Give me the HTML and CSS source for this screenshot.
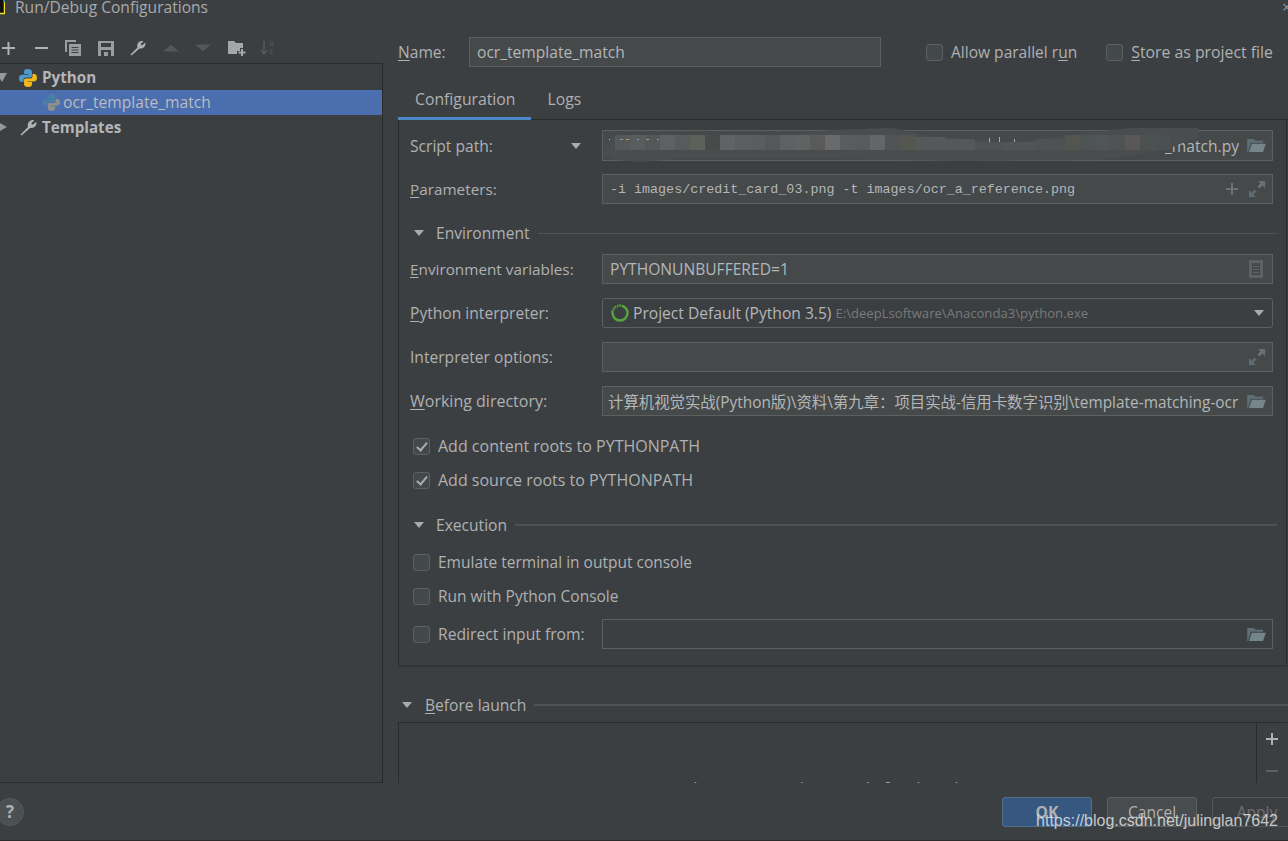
FILE: index.html
```html
<!DOCTYPE html>
<html lang="en">
<head>
  <meta charset="UTF-8">
  <meta name="viewport" content="width=device-width, initial-scale=1.0">
  <title>Run/Debug Configurations</title>
  <link rel="stylesheet" href="styles.css">
</head>
<body>
  <div class="dialog">
    <!-- Title bar -->
    <div class="titlebar">
      <svg class="app-icon" width="5" height="15" viewBox="0 0 5 15"><rect x="0" y="0" width="4" height="14" fill="#111"/><path d="M0 13.500H4.500V2" fill="none" stroke="#f4e01d" stroke-width="1.500"/><rect x="3" y="0" width="2" height="2" fill="#2f7fc0"/></svg>
      <span class="title-text">Run/Debug Configurations</span>
      <span class="close-x">×</span>
    </div>

    <div class="main">
      <!-- Left side: toolbar and tree -->
      <div class="side">
        <div class="toolbar">
          <svg class="tool" viewBox="0 0 16 16"><path d="M2 8h13M8.500 2v13" stroke="#afb1b3" stroke-width="2"/></svg>
          <svg class="tool" viewBox="0 0 16 16"><path d="M2 8h13" stroke="#afb1b3" stroke-width="2"/></svg>
          <svg class="tool" viewBox="0 0 16 16"><path d="M0 0h11v2H2v10H0z" fill="#9a9c9e"/><path d="M4 4h12v12H4z" fill="#9a9c9e"/><path d="M6.500 7.500h7M6.500 10h7M6.500 12.500h7" stroke="#3c3f41"/></svg>
          <svg class="tool" viewBox="0 0 16 16"><path d="M0 1h16v15H0z" fill="#9a9c9e"/><path d="M3 3h10v4H3zM3 10h10v6H3z" fill="#3c3f41"/><path d="M6 12h4v4H6z" fill="#9a9c9e"/></svg>
          <svg class="tool" viewBox="0 0 16 16"><path d="M1.500 15.500l-1-1 7-7c-.7-2.500.2-6 4-6.500.7 0 1.300.1 2 .4L10.500 4l1.500 1.500 3.300-3c.8 3.500-1.500 6.500-5.800 6z" fill="#afb1b3"/></svg>
          <svg class="tool" viewBox="0 0 16 16"><path d="M.5 11.500L8 4.500l7.500 7z" fill="#55585a"/></svg>
          <svg class="tool" viewBox="0 0 16 16"><path d="M.5 4.500L8 11.500l7.500-7z" fill="#55585a"/></svg>
          <svg class="tool tool-wide" viewBox="0 0 18 16"><path d="M0 1h6l2 2h7v5h-3v3H9v3H0z" fill="#a4a6a8"/><path d="M10.500 12.500h7M14 9v7" stroke="#a4a6a8" stroke-width="2"/></svg>
          <svg class="tool" viewBox="0 0 16 16"><path d="M4 1v12M1 10l3 4 3-4" fill="none" stroke="#55585a" stroke-width="1.500"/><text x="9" y="6" class="sort-a">a</text><text x="9" y="14" class="sort-a">z</text></svg>
        </div>
        <div class="tree">
          <div class="tree-row bold">
            <span class="arrow-down"></span>
            <svg class="py" viewBox="0 0 16 16"><path d="M8 0C5 0 4.500 1.200 4.500 2.500V4.500H8.500V5H2.500C1 5 0 6.200 0 8.200S1 11.500 2.500 11.500H4V9.500C4 8.300 5 7.500 6 7.500H10C11 7.500 11.500 6.800 11.500 6V2.500C11.500 1 10 0 8 0Z" fill="#4c9ac9"/><path d="M8 16C11 16 11.500 14.800 11.500 13.500V11.500H7.500V11H13.500C15 11 16 9.800 16 7.800S15 4.500 13.500 4.500H12V6.500C12 7.700 11 8.500 10 8.500H6C5 8.500 4.500 9.200 4.500 10V13.500C4.500 15 6 16 8 16Z" fill="#f2b81c"/></svg>
            <span class="tree-text">Python</span>
          </div>
          <div class="tree-row selected">
            <svg class="py py-dim" viewBox="0 0 16 16"><path d="M8 0C5 0 4.500 1.200 4.500 2.500V4.500H8.500V5H2.500C1 5 0 6.200 0 8.200S1 11.500 2.500 11.500H4V9.500C4 8.300 5 7.500 6 7.500H10C11 7.500 11.500 6.800 11.500 6V2.500C11.500 1 10 0 8 0Z" fill="#4a7fa8"/><path d="M8 16C11 16 11.500 14.800 11.500 13.500V11.500H7.500V11H13.500C15 11 16 9.800 16 7.800S15 4.500 13.500 4.500H12V6.500C12 7.700 11 8.500 10 8.500H6C5 8.500 4.500 9.200 4.500 10V13.500C4.500 15 6 16 8 16Z" fill="#8c8f8a"/></svg>
            <span class="tree-text">ocr_template_match</span>
          </div>
          <div class="tree-row bold">
            <span class="arrow-right"></span>
            <svg class="wrench" viewBox="0 0 16 16"><path d="M1.500 15.500l-1-1 7-7c-.7-2.500.2-6 4-6.500.7 0 1.300.1 2 .4L10.500 4l1.500 1.500 3.300-3c.8 3.500-1.500 6.500-5.800 6z" fill="#afb1b3"/></svg>
            <span class="tree-text">Templates</span>
          </div>
        </div>
      </div>

      <!-- Right side: form -->
      <div class="content">
        <div class="name-row">
          <span class="name-label"><u>N</u>ame:</span>
          <div class="field name-field">ocr_template_match</div>
          <span class="check check-parallel"><i class="box"></i><span>Allow parallel r<u>u</u>n</span></span>
          <span class="check check-store"><i class="box"></i><span><u>S</u>tore as project file</span></span>
        </div>

        <div class="tabs">
          <span class="tab active">Configuration</span>
          <span class="tab">Logs</span>
        </div>

        <div class="panel">
          <div class="row row-script">
            <label>Script path:<span class="drop"></span></label>
            <div class="field script-field">
              <span class="grow right">_match.py</span>
              <svg class="folder" viewBox="0 0 20 16"><use href="#folder-icon"/></svg>
              <!-- smear painted over the private part of the path -->
              <svg class="smear" width="600" height="33" viewBox="0 0 600 33">
                <path d="M2 20L8 8 13 5H180L230 0 290-2 328 6 398 12 418 12 468 5 501 1 528-2H596V7L563 20 523 27 495 30 358 31 178 28 83 28 38 32 13 30 2 25Z" fill="#4a4d4e"/>
                <g class="cells-top">
                  <rect x="13" y="5" width="15" height="15" fill="#56595a"/>
                  <rect x="28" y="5" width="15" height="15" fill="#5a5d5e"/>
                  <rect x="43" y="5" width="15" height="15" fill="#555859"/>
                  <rect x="58" y="5" width="15" height="15" fill="#5e6162"/>
                  <rect x="73" y="5" width="15" height="15" fill="#585b5c"/>
                  <rect x="88" y="5" width="15" height="15" fill="#5e605a"/>
                  <rect x="103" y="5" width="15" height="15" fill="#484b4c"/>
                  <rect x="118" y="5" width="15" height="15" fill="#606364"/>
                  <rect x="133" y="5" width="15" height="15" fill="#5b5e5f"/>
                  <rect x="148" y="5" width="15" height="15" fill="#5a5c5d"/>
                  <rect x="163" y="5" width="15" height="15" fill="#555859"/>
                  <rect x="178" y="5" width="15" height="15" fill="#5e6162"/>
                  <rect x="193" y="5" width="15" height="15" fill="#606364"/>
                  <rect x="208" y="5" width="15" height="15" fill="#5a5a5b"/>
                  <rect x="223" y="5" width="15" height="15" fill="#686a6b"/>
                  <rect x="238" y="5" width="15" height="15" fill="#5a5d5e"/>
                  <rect x="253" y="5" width="15" height="15" fill="#585b5c"/>
                  <rect x="268" y="5" width="15" height="15" fill="#646566"/>
                  <rect x="283" y="5" width="15" height="15" fill="#515455"/>
                  <rect x="298" y="5" width="15" height="15" fill="#55564f"/>
                  <rect x="313" y="7" width="30" height="13" fill="#565859"/>
                  <rect x="343" y="9" width="30" height="11" fill="#555858"/>
                  <rect x="373" y="12" width="30" height="8" fill="#505354"/>
                  <rect x="403" y="12" width="30" height="8" fill="#525556"/>
                  <rect x="433" y="9" width="30" height="11" fill="#4f5253"/>
                  <rect x="463" y="5" width="15" height="15" fill="#55554f"/>
                  <rect x="478" y="5" width="15" height="15" fill="#4f5354"/>
                  <rect x="493" y="5" width="15" height="15" fill="#505556"/>
                  <rect x="508" y="5" width="15" height="15" fill="#4f5354"/>
                  <rect x="523" y="5" width="15" height="15" fill="#5a5856"/>
                  <rect x="538" y="5" width="15" height="15" fill="#4d5152"/>
                  <rect x="553" y="5" width="15" height="15" fill="#4b5051"/>
                </g>
                <rect x="7" y="9" width="1" height="1" fill="#c7cbcd"/>
                <rect x="18" y="9" width="3" height="1" fill="#7d9fb5"/>
                <rect x="24" y="9" width="3" height="1" fill="#b59b7d"/>
                <rect x="35" y="9" width="2" height="1" fill="#7d9fb5"/>
                <rect x="44" y="9" width="3" height="1" fill="#b59b7d"/>
                <rect x="55" y="9" width="2" height="1" fill="#7d9fb5"/>
                <rect x="387" y="8" width="1" height="4" fill="#a7a9ab"/>
                <rect x="397" y="7" width="1" height="5" fill="#a7a9ab"/>
                <rect x="412" y="9" width="1" height="3" fill="#a7a9ab"/>
              </svg>
            </div>
          </div>
          <div class="row row-params">
            <label class="label-tight"><u>P</u>arameters:</label>
            <div class="field mono">
              <span class="grow">-i images/credit_card_03.png -t images/ocr_a_reference.png</span>
              <svg class="small-icon plus-icon" viewBox="0 0 14 14"><path d="M1 7h12M7 1v12" stroke="#6e7173" stroke-width="2"/></svg>
              <svg class="small-icon" viewBox="0 0 16 16"><use href="#expand-icon"/></svg>
            </div>
          </div>

          <div class="group-head env-head"><span class="drop"></span><span>Environment</span><i class="line"></i></div>
          <div class="row row-env">
            <label class="label-tight"><u>E</u>nvironment variables:</label>
            <div class="field">
              <span class="grow">PYTHONUNBUFFERED=1</span>
              <svg class="doc" viewBox="0 0 14 18"><path d="M0 0h14v18H0zM3 3v12h8V3z" fill="#5d6164" fill-rule="evenodd"/><path d="M4 6.500h6M4 9.500h6M4 12.500h6" stroke="#5d6164"/></svg>
            </div>
          </div>
          <div class="row">
            <label><u>P</u>ython interpreter:</label>
            <div class="field combo">
              <svg class="ring" viewBox="0 0 18 18"><circle cx="9" cy="9" r="7.500" fill="none" stroke="#54a63d" stroke-width="2.500"/><path d="M2 6.500A7.500 7.500 0 0 1 11 1.800" fill="none" stroke="#3c3f41" stroke-width="2.500" stroke-dasharray="1 1.500"/></svg>
              <span>Project Default (Python 3.5)</span>
              <span class="grow path-hint">E:\deepLsoftware\Anaconda3\python.exe</span>
              <span class="drop combo-drop"></span>
            </div>
          </div>
          <div class="row">
            <label>Interpreter options:</label>
            <div class="field">
              <span class="grow"></span>
              <svg class="small-icon" viewBox="0 0 16 16"><use href="#expand-icon"/></svg>
            </div>
          </div>
          <div class="row">
            <label class="label-wide"><u>W</u>orking directory:</label>
            <div class="field">
              <span class="grow cjk">计算机视觉实战(Python版)\资料\第九章：项目实战-信用卡数字识别\template-matching-ocr</span>
              <svg class="folder" viewBox="0 0 20 16"><use href="#folder-icon"/></svg>
            </div>
          </div>

          <div class="check-list first-list">
            <span class="check"><i class="box checked"></i>Add content roots to PYTHONPATH</span>
            <span class="check"><i class="box checked"></i>Add source roots to PYTHONPATH</span>
          </div>

          <div class="group-head exec-head"><span class="drop"></span><span>Execution</span><i class="line"></i></div>
          <div class="check-list exec-list">
            <span class="check"><i class="box"></i>Emulate terminal in output console</span>
            <span class="check"><i class="box"></i>Run with Python Console</span>
          </div>
          <div class="row redirect">
            <label class="check"><i class="box"></i>Redirect input from:</label>
            <div class="field plain">
              <span class="grow"></span>
              <svg class="folder" viewBox="0 0 20 16"><use href="#folder-icon"/></svg>
            </div>
          </div>
        </div>

        <div class="group-head launch-head"><span class="drop"></span><span><u>B</u>efore launch</span><i class="line"></i></div>
        <div class="task-list">
          <div class="task-empty">There are no tasks to run before launch</div>
          <div class="task-tools">
            <svg viewBox="0 0 14 14"><path d="M1 7h12M7 1v12" stroke="#afb1b3" stroke-width="2"/></svg>
            <svg viewBox="0 0 14 14"><path d="M1 7h12" stroke="#5f6264" stroke-width="2"/></svg>
          </div>
        </div>
      </div>
    </div>

    <!-- Footer buttons -->
    <div class="footer">
      <span class="help">?</span>
      <div class="buttons">
        <span class="btn primary">OK</span>
        <span class="btn">Cancel</span>
        <span class="btn disabled">Apply</span>
      </div>
    </div>
    <div class="watermark">https://blog.csdn.net/julinglan7642</div>
  </div>

  <svg class="defs" width="0" height="0">
    <symbol id="folder-icon" viewBox="0 0 20 16">
      <path d="M0 15V1h7l2 2h8v2H4L1.500 13 1 15z" fill="#5f6f76"/>
      <path d="M5 6h15l-3 9H2z" fill="#74858c"/>
    </symbol>
    <symbol id="expand-icon" viewBox="0 0 16 16">
      <path d="M9 0h7v7l-2.500-2.500-3 3-2-2 3-3z" fill="#6e7173"/>
      <path d="M7 16H0V9l2.500 2.500 3-3 2 2-3 3z" fill="#5d6b74"/>
    </symbol>
  </svg>
</body>
</html>
```

FILE: styles.css
```css
body {
  margin: 0;
  background-color: #3c3f41;
  color: #afb1b3;
  font-family: "Open Sans", "Noto Sans CJK SC", sans-serif;
  font-size: 15.6px;
  overflow: hidden;
}
u {
  text-underline-offset: 2px;
}
.defs {
  position: absolute;
}
.dialog {
  position: relative;
  height: 840px;
  border-bottom: 1px solid #2b2b2b;
  display: flex;
  flex-direction: column;
  overflow: hidden;
}

/* Title bar */
.titlebar {
  height: 14px;
  display: flex;
  align-items: flex-start;
  gap: 10px;
}
.app-icon {
  flex: none;
}
.title-text {
  flex: 1;
  line-height: 14px;
  color: #a8aaac;
}
.close-x {
  line-height: 14px;
  color: #999;
  margin-right: -3px;
}

/* Main area */
.main {
  height: 769px;
  flex: none;
  display: flex;
  overflow: hidden;
}
.side {
  width: 383px;
  flex: none;
  display: flex;
  flex-direction: column;
}
.toolbar {
  height: 49px;
  flex: none;
  box-sizing: border-box;
  padding: 26px 0 0 0;
  display: flex;
  gap: 16.5px;
}
.tool {
  width: 16px;
  height: 16px;
  flex: none;
  overflow: visible;
}
.tool-wide {
  width: 18px;
  margin-right: -2px;
}
.tree {
  flex: 1;
  border-top: 1px solid #2b2b2b;
  border-right: 1px solid #2b2b2b;
  border-bottom: 1px solid #2b2b2b;
  padding-top: 1px;
}
.tree-row {
  height: 25px;
  display: flex;
  align-items: center;
  color: #b4b6b8;
  position: relative;
  padding-left: 19px;
  gap: 5px;
}
.tree-text {
  margin-top: -2px;
}
.bold {
  font-weight: 700;
  font-size: 15.2px;
}
.selected {
  background-color: #4b6eaf;
  padding-left: 43px;
  gap: 3px;
  color: #b9bcc0;
}
.py {
  width: 18px;
  height: 18px;
}
.py-dim {
  width: 17px;
  height: 17px;
}
.wrench {
  width: 17px;
  height: 17px;
  margin-left: 1px;
}
.arrow-down {
  position: absolute;
  left: -3px;
  top: 8px;
  border-left: 5px solid transparent;
  border-right: 5px solid transparent;
  border-top: 9px solid #96989a;
}
.arrow-right {
  position: absolute;
  left: 0;
  top: 8px;
  border-top: 4px solid transparent;
  border-bottom: 4px solid transparent;
  border-left: 7px solid #96989a;
}

/* Form */
.content {
  flex: 1;
  min-width: 0;
  padding-left: 15px;
}
.name-row {
  height: 30px;
  margin-top: 23px;
  display: flex;
  align-items: center;
}
.name-label {
  width: 71px;
}
.field {
  flex: 1;
  min-width: 0;
  height: 30px;
  box-sizing: border-box;
  border: 1px solid #5e6060;
  background-color: #45494a;
  padding: 0 7px;
  display: flex;
  align-items: center;
  gap: 8px;
  position: relative;
  color: #b4b6b8;
  white-space: nowrap;
  overflow: hidden;
}
.name-field {
  flex: none;
  width: 412px;
}
.check {
  display: flex;
  align-items: center;
  white-space: nowrap;
  color: #afb1b3;
  font-size: 16px;
  line-height: 20px;
}
.box {
  width: 17px;
  height: 17px;
  box-sizing: border-box;
  border: 1px solid #5e6060;
  border-radius: 3px;
  background-color: #43494a;
  margin-right: 8px;
  flex: none;
  position: relative;
}
.box.checked::after {
  content: "";
  position: absolute;
  left: 5px;
  top: 1px;
  width: 4px;
  height: 9px;
  border: solid #a9abad;
  border-width: 0 2px 2px 0;
  transform: rotate(40deg);
}
.check-parallel {
  margin-left: 45px;
  font-size: 15.55px;
}
.check-store {
  margin-left: 29px;
  font-size: 15.8px;
}
.tabs {
  height: 53px;
  box-sizing: border-box;
  display: flex;
  align-items: flex-end;
  border-bottom: 1px solid #2b2b2b;
  font-size: 15.75px;
}
.tab {
  padding: 0 16px;
  height: 37px;
  box-sizing: border-box;
  line-height: 32px;
  margin-bottom: -1px;
}
.tab.active {
  padding-left: 17px;
  border-bottom: 3px solid #4a88c7;
}
.panel {
  height: 547px;
  box-sizing: border-box;
  border-left: 1px solid #2b2b2b;
  border-right: 1px solid #2b2b2b;
  border-bottom: 2px solid #323436;
  padding: 10px 13px 0 11px;
  margin-right: 1px;
}
.row {
  display: flex;
  align-items: center;
  margin-top: 14px;
}
.row-script {
  margin-top: 0;
}
.row-params {
  margin-top: 13px;
}
.row-env {
  margin-top: 11px;
}
.row label {
  width: 192px;
  flex: none;
  display: flex;
  align-items: center;
  position: relative;
  font-size: 15.6px;
}
.row .label-tight {
  font-size: 15.3px;
}
.row .label-wide {
  font-size: 16px;
}
.row-script .field {
  height: 31px;
}
.script-field {
  overflow: visible;
}
.drop {
  border-left: 5.5px solid transparent;
  border-right: 5.5px solid transparent;
  border-top: 6px solid #a9abad;
  width: 0;
  height: 0;
  flex: none;
}
.row-script .drop {
  margin-left: 78px;
}
.grow {
  flex: 1;
  min-width: 0;
  overflow: hidden;
}
.right {
  text-align: right;
}
.folder {
  width: 19px;
  height: 15px;
  flex: none;
  margin-right: -1px;
}
.smear {
  position: absolute;
  left: -1px;
  top: -1px;
  overflow: visible;
}
.mono {
  font-family: "Liberation Mono", monospace;
  font-size: 13.37px;
}
.small-icon {
  width: 16px;
  height: 16px;
  flex: none;
}
.plus-icon {
  width: 14px;
  height: 14px;
  margin-right: 2px;
}
.doc {
  width: 14px;
  height: 18px;
  flex: none;
  margin-right: 2px;
}
.combo {
  background-color: #3c3f41;
  border-radius: 3px;
  gap: 4px;
}
.ring {
  width: 18px;
  height: 18px;
  flex: none;
  margin-left: 1px;
}
.path-hint {
  font-size: 13.1px;
  color: #787a7c;
}
.combo-drop {
  margin-right: 1px;
}
.cjk {
  font-size: 15.4px;
  margin-left: -2px;
}
.group-head {
  display: flex;
  align-items: center;
  height: 20px;
}
.group-head .drop {
  margin-left: 4px;
  margin-right: 12px;
}
.line {
  flex: 1;
  height: 1px;
  background-color: #505356;
  margin-left: 8px;
}
.env-head {
  margin-top: 19px;
  margin-right: -4px;
}
.exec-head {
  margin-top: 25px;
  margin-right: -4px;
}
.exec-head .line,
.launch-head .line {
  height: 2px;
}
.check-list {
  display: flex;
  flex-direction: column;
  gap: 14px;
  margin-top: 17px;
  padding-left: 3px;
}
.first-list {
  margin-top: 20px;
}
.exec-list .check {
  font-size: 15.5px;
}
.redirect {
  margin-top: 13px;
  padding-left: 3px;
}
.redirect label {
  width: 189px;
  font-size: 15.7px;
}
.plain {
  background-color: #3c3f41;
}
.launch-head {
  margin-top: 28px;
}
.launch-head .drop {
  margin-left: 4px;
  margin-right: 13px;
}
.task-list {
  margin-top: 7px;
  height: 70px;
  border-top: 1px solid #2b2b2b;
  border-left: 1px solid #2b2b2b;
  margin-right: 1px;
  display: flex;
}
.task-empty {
  flex: 1;
  text-align: center;
  padding-top: 54px;
  padding-right: 6px;
  font-size: 15.1px;
}
.task-tools {
  width: 31px;
  border-left: 1px solid #2b2b2b;
  box-sizing: border-box;
  display: flex;
  flex-direction: column;
  align-items: center;
  padding-top: 9px;
  gap: 18px;
}
.task-tools svg {
  width: 14px;
  height: 14px;
}

/* Footer */
.footer {
  flex: 1;
  display: flex;
  align-items: center;
  justify-content: space-between;
  padding-top: 1px;
}
.help {
  width: 28px;
  height: 28px;
  margin-left: -4px;
  box-sizing: border-box;
  border: 1px solid #555859;
  border-radius: 50%;
  background-color: #4b5052;
  text-align: center;
  line-height: 26px;
  font-weight: 700;
  font-size: 17px;
}
.buttons {
  display: flex;
  gap: 15px;
  margin-right: -14px;
}
.btn {
  width: 90px;
  height: 30px;
  box-sizing: border-box;
  border: 1px solid #5e6060;
  border-radius: 3px;
  background-color: #484c4e;
  text-align: center;
  line-height: 28px;
  color: #afb1b3;
}
.primary {
  background-color: #365880;
  border-color: #4c708c;
  font-weight: 700;
}
.disabled {
  background-color: transparent;
  border-color: #55585a;
  color: #6e7072;
}
.watermark {
  position: absolute;
  right: 10px;
  top: 812px;
  font-family: "Liberation Sans", Arial, sans-serif;
  font-size: 16px;
  color: rgba(235, 235, 235, 0.8);
}
.sort-a {
  font-size: 9px;
  fill: #55585a;
}
```
